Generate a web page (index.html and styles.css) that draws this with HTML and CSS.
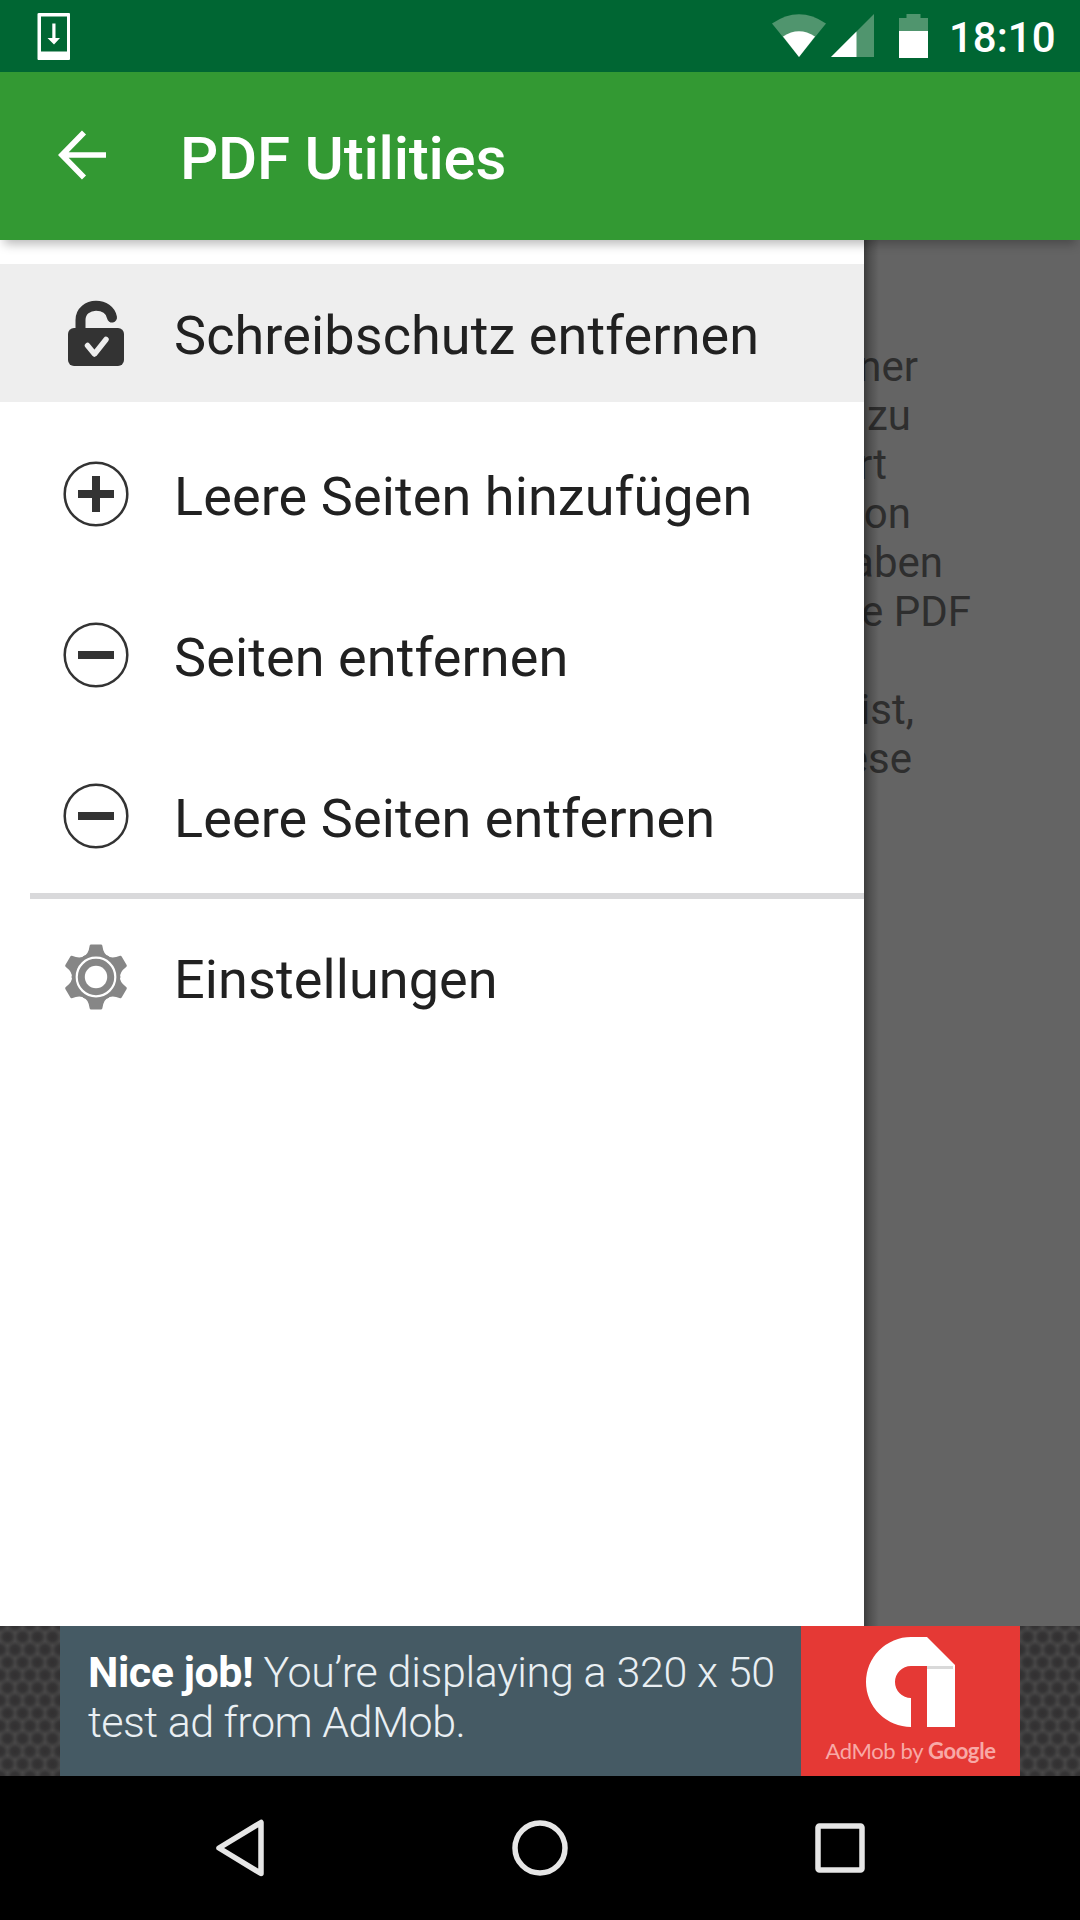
FILE: index.html
```html
<!DOCTYPE html>
<html lang="de">
<head>
<meta charset="utf-8">
<title>PDF Utilities</title>
<link rel="stylesheet" href="styles.css">
</head>
<body>
<div class="screen">
  <div class="status-bar">
    <svg class="status-update" width="34" height="50" viewBox="0 0 34 50"><path fill="#fff" fill-rule="evenodd" d="M2 0H32Q33 0 33 1V46Q33 47 32 47H1.500Q.5 47 .5 46V1Q.5 0 2 0ZM4 3.500V38.500H30V3.500Z"/><path fill="#fff" d="M15.300 10.500H18.500V25H23L17 31.500L10.500 25H15.300Z"/></svg>
    <svg class="status-wifi" width="54" height="44" viewBox="0 0 54 44"><path fill="#50956e" d="M0 9.500Q27-9 54 9.500L27 43Z"/><path fill="#fff" d="M11 22.500Q27 12 43 22.500L27 43Z"/></svg>
    <svg class="status-signal" width="43" height="43" viewBox="0 0 43 43"><path fill="#50956e" d="M43 0V43H0Z"/><path fill="#fff" d="M25.500 17.500V43H0Z"/></svg>
    <svg class="status-battery" width="29" height="44" viewBox="0 0 29 44"><path fill="#50956e" d="M7.500 0H21.500V4H29V18H0V4H7.500Z"/><path fill="#fff" d="M0 17H29V44H0Z"/></svg>
    <span class="clock">18:10</span>
  </div>
  <header class="app-bar">
    <svg class="back" width="48" height="50" viewBox="0 0 48 50"><path fill="none" stroke="#fff" stroke-width="5.700" d="M48 25H4M26 2.500L4 25L26 47.500"/></svg>
    <h1 class="title">PDF Utilities</h1>
  </header>
  <main class="content">
    <div class="description">
      <p class="line l1">ner</p>
      <p class="line l2">zu</p>
      <p class="line l3">rt</p>
      <p class="line l4">on</p>
      <p class="line l5">aben</p>
      <p class="line l6">e PDF</p>
      <p class="line l7"></p>
      <p class="line l8">ist,</p>
      <p class="line l9">ese</p>
    </div>
    <nav class="drawer">
      <a class="item selected">
        <svg class="icon" width="66" height="66" viewBox="0 0 66 66"><path fill="none" stroke="#333" stroke-width="10" stroke-linecap="round" d="M17.500 31V20C17.500 11 25 5.800 33 5.800C41 5.800 47.500 10 49 17.500"/><rect x="5" y="28" width="56" height="38" rx="6" fill="#333"/><path fill="none" stroke="#eee" stroke-width="5.500" stroke-linecap="round" stroke-linejoin="round" d="M24.500 45.500L31.500 54L43 39.500"/></svg>
        <span>Schreibschutz entfernen</span>
      </a>
      <a class="item">
        <svg class="icon" width="66" height="66" viewBox="0 0 66 66"><circle cx="33" cy="33" r="31.300" fill="none" stroke="#333" stroke-width="2.500"/><path fill="#333" d="M29 15H37V29H51V37H37V51H29V37H15V29H29Z"/></svg>
        <span>Leere Seiten hinzufügen</span>
      </a>
      <a class="item">
        <svg class="icon" width="66" height="66" viewBox="0 0 66 66"><circle cx="33" cy="33" r="31.300" fill="none" stroke="#333" stroke-width="2.500"/><path fill="#333" d="M15 29H51V37H15Z"/></svg>
        <span>Seiten entfernen</span>
      </a>
      <a class="item">
        <svg class="icon" width="66" height="66" viewBox="0 0 66 66"><circle cx="33" cy="33" r="31.300" fill="none" stroke="#333" stroke-width="2.500"/><path fill="#333" d="M15 29H51V37H15Z"/></svg>
        <span>Leere Seiten entfernen</span>
      </a>
      <hr class="divider">
      <a class="item">
        <svg class="icon" width="66" height="66" viewBox="0 0 66 66"><defs><path id="tooth" d="M20 12.500Q25.500 11 26.700 1.500Q27 .5 28 .5H38Q39 .5 39.300 1.500Q40.500 11 46 12.500L33 24Z"/></defs><g fill="#868686"><circle cx="33" cy="33" r="24"/><use href="#tooth"/><use href="#tooth" transform="rotate(60 33 33)"/><use href="#tooth" transform="rotate(120 33 33)"/><use href="#tooth" transform="rotate(180 33 33)"/><use href="#tooth" transform="rotate(240 33 33)"/><use href="#tooth" transform="rotate(300 33 33)"/></g><circle cx="33" cy="33" r="19.300" fill="none" stroke="#fff" stroke-width="2.200"/><circle cx="33" cy="33" r="11.200" fill="#fff"/></svg>
        <span>Einstellungen</span>
      </a>
    </nav>
  </main>
  <aside class="ad">
    <svg class="texture" width="1080" height="150"><defs><radialGradient id="dot"><stop offset="0" stop-color="#323031"/><stop offset=".45" stop-color="#353435"/><stop offset="1" stop-color="#353435" stop-opacity="0"/></radialGradient><pattern id="mesh" width="15" height="25.400" patternUnits="userSpaceOnUse" patternTransform="translate(0 -1.700)"><rect width="15" height="25.400" fill="#4b4a4a"/><circle cx="0" cy="0" r="8.700" fill="url(#dot)"/><circle cx="15" cy="0" r="8.700" fill="url(#dot)"/><circle cx="0" cy="25.400" r="8.700" fill="url(#dot)"/><circle cx="15" cy="25.400" r="8.700" fill="url(#dot)"/><circle cx="7.500" cy="12.700" r="8.700" fill="url(#dot)"/></pattern></defs><rect width="1080" height="150" fill="url(#mesh)"/></svg>
    <div class="banner">
      <p class="ad-text"><b>Nice job!</b> You’re displaying a 320 x 50<br><span class="second">test ad from AdMob.</span></p>
      <div class="brand">
        <svg width="90" height="90" viewBox="0 0 90 90"><path fill="#fff" d="M45 0H61L89 28V90H61V29H45A16 16 0 0 0 45 61V90A45 45 0 0 1 45 0Z"/><path fill="#d9d9d9" d="M61 29H87V32H61Z"/></svg>
        <span class="brand-name">AdMob by <b>Google</b></span>
      </div>
    </div>
  </aside>
  <footer class="nav-bar">
    <svg width="58" height="58" viewBox="0 0 58 58"><path fill="none" stroke="#e6e6e6" stroke-width="5.500" stroke-linejoin="round" d="M50 3.500V54.500L8 29Z"/></svg>
    <svg width="58" height="58" viewBox="0 0 58 58"><circle cx="29" cy="29" r="25" fill="none" stroke="#e6e6e6" stroke-width="5.500"/></svg>
    <svg width="58" height="58" viewBox="0 0 58 58"><rect x="7" y="7" width="44" height="44" rx="1.500" fill="none" stroke="#e6e6e6" stroke-width="5.500"/></svg>
  </footer>
</div>
</body>
</html>
```
FILE: styles.css
```css
* { box-sizing: border-box; margin: 0; padding: 0; }
body { font-family: Roboto, sans-serif; background: #000; }
svg { display: block; flex: none; }
.screen { width: 1080px; height: 1920px; display: flex; flex-direction: column; overflow: hidden; }

.status-bar { height: 72px; background: #063; display: flex; align-items: flex-start; padding: 14px 23px 0 37px; }
.status-update { margin: -1px auto 0 0; }
.status-signal { margin-left: 5px; }
.status-battery { margin-left: 25px; }
.clock { width: 108px; margin-left: 21px; margin-top: -1px; font-size: 42px; line-height: 49px; font-weight: 500; color: #fff; white-space: nowrap; }

.app-bar { height: 168px; background: #393; display: flex; align-items: center; padding: 0 58px; position: relative; z-index: 2; box-shadow: 0 8px 10px -4px rgba(0, 0, 0, .28); }
.back { margin-top: -3px; }
.title { margin-left: 74px; margin-top: 5px; font-size: 60px; line-height: 70px; font-weight: 500; letter-spacing: -.2px; color: #fff; white-space: nowrap; }

.content { height: 1386px; background: #646464; position: relative; }
.description { padding-top: 102px; }
.line { height: 49px; font-size: 42px; line-height: 49px; color: #2e2e2e; text-align: right; white-space: pre; }
.l1 { padding-right: 162px; }
.l2 { padding-right: 169px; }
.l3 { padding-right: 193px; }
.l4 { padding-right: 169px; }
.l5 { padding-right: 137px; }
.l6 { padding-right: 109px; }
.l8 { padding-right: 166px; }
.l9 { padding-right: 168px; }

.drawer { position: absolute; inset: 0 auto 0 0; width: 864px; padding-top: 24px; background: #fff; display: flex; flex-direction: column; }
.drawer::after { content: ""; position: absolute; top: 0; bottom: 0; left: 100%; width: 15px; background: linear-gradient(90deg, rgba(0, 0, 0, .4), rgba(0, 0, 0, .2) 40%, transparent); }
.item { height: 138px; margin-bottom: 23px; display: flex; align-items: center; padding-left: 63px; gap: 45px; font-size: 54px; line-height: 64px; letter-spacing: .1px; color: #212121; white-space: nowrap; }
.item span { padding-top: 5px; }
.selected { background: #eee; }
.divider { height: 6px; margin: -15px 0 9px 30px; border: 0; background: #d9d9db; flex: none; }

.ad { height: 150px; display: grid; justify-items: center; }
.ad > * { grid-area: 1 / 1; }
.banner { width: 960px; height: 150px; display: flex; background: #455a64; z-index: 1; }
.ad-text { width: 741px; padding: 21px 0 0 28px; font-size: 43px; line-height: 50px; font-weight: 300; letter-spacing: -.34px; color: #e9eff3; white-space: nowrap; }
.ad-text b { font-weight: 700; letter-spacing: -.45px; color: #fff; }
.second { letter-spacing: -.5px; }
.brand { flex: 1; background: #e53935; display: flex; flex-direction: column; align-items: center; padding-top: 11px; }
.brand-name { margin-top: 9px; font: 22px/30px Lato, sans-serif; letter-spacing: -.36px; color: #f8a9a6; white-space: nowrap; }
.brand-name b { font-weight: 700; }

.nav-bar { height: 144px; background: #000; display: flex; align-items: center; justify-content: center; gap: 242px; }
```
